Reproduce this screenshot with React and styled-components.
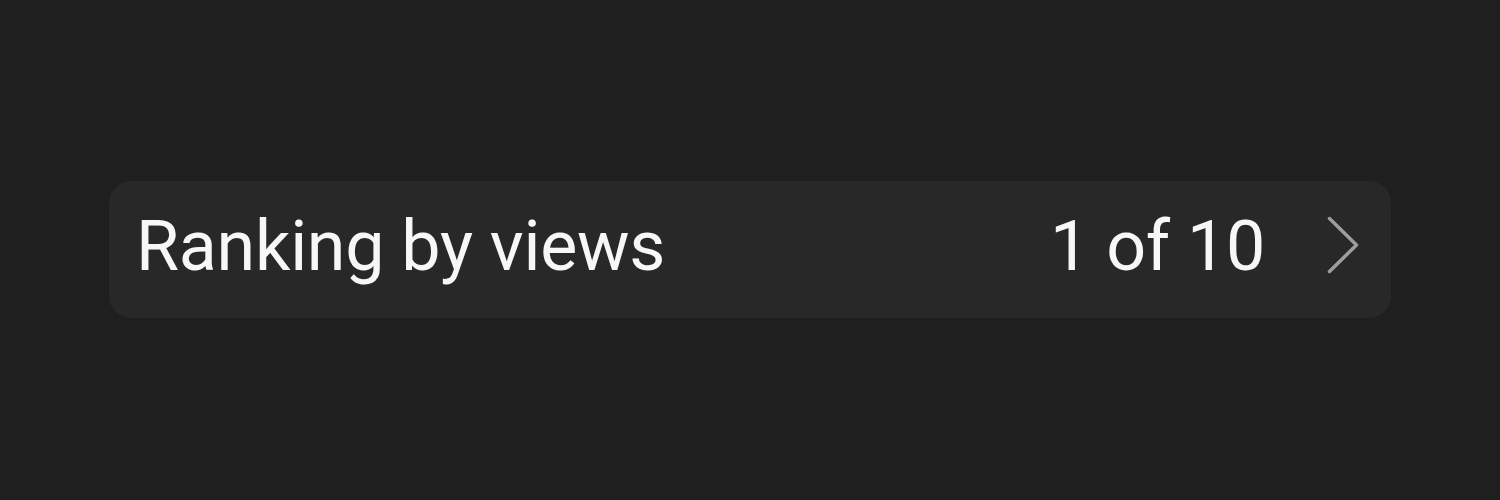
import React from "react";
import styled, { createGlobalStyle } from "styled-components";

const Global = createGlobalStyle`
  html, body { margin: 0; padding: 0; background: #1f1f1f; }
  body { font-family: Roboto, "Noto Sans", sans-serif; }
`;

const Page = styled.div`
  width: 1500px;
  height: 500px;
  display: flex;
  align-items: center;
  justify-content: center;
`;

const Card = styled.div`
  width: 1282px;
  height: 137px;
  margin-top: -2px;
  box-sizing: border-box;
  background: #282828;
  border-radius: 22px;
  display: flex;
  align-items: center;
  padding: 0 32px 0 27px;
`;

const Label = styled.span`
  color: #f7f7f7;
  font-size: 70px;
  font-weight: 400;
  line-height: 1;
  letter-spacing: -0.3px;
  margin-bottom: 7px;
`;

const Title = styled(Label)`
  flex: 1;
`;

const Counter = styled(Label)`
  margin-right: 62px;
`;

const ChevronIcon = styled.svg`
  flex: none;
  margin-bottom: 8px;
`;

const Chevron = () => (
  <ChevronIcon width="32" height="58" viewBox="0 0 32 58" fill="none">
    <path d="M2.5 2.5 L29.5 29 L2.5 55.5" stroke="#9d9d9d" strokeWidth="3.5" strokeLinecap="round" strokeLinejoin="round" />
  </ChevronIcon>
);

export default function App() {
  return (
    <>
      <Global />
      <Page>
        <Card>
          <Title>Ranking by views</Title>
          <Counter>1 of 10</Counter>
          <Chevron />
        </Card>
      </Page>
    </>
  );
}
